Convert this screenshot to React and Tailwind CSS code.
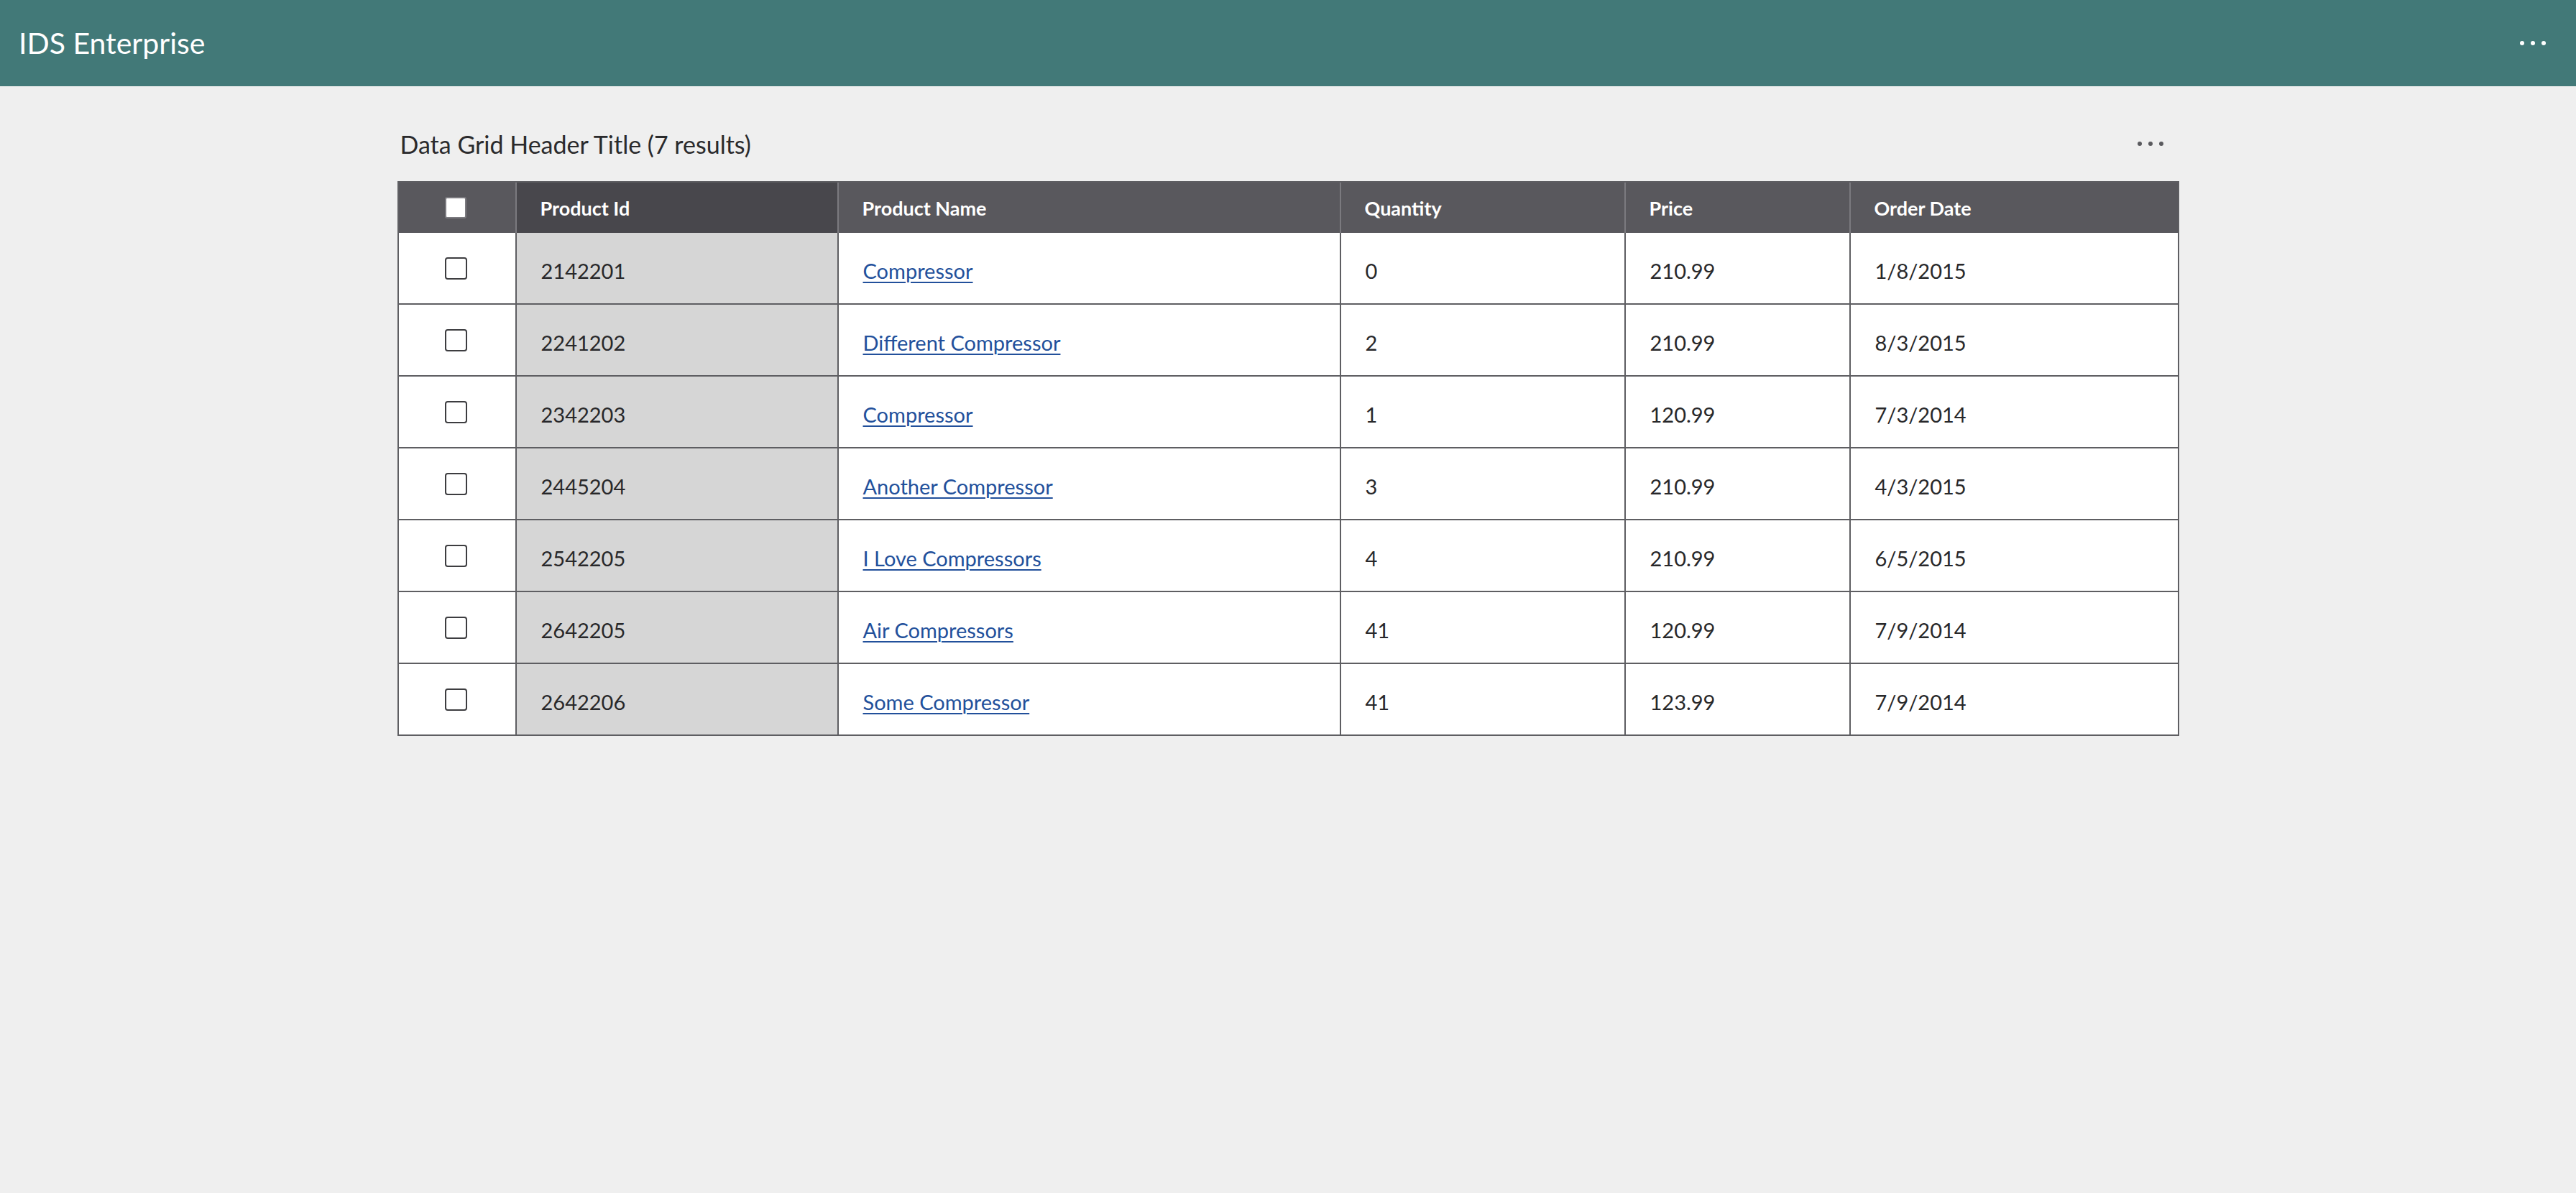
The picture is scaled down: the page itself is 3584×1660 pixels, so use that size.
// App.jsx — IDS Enterprise data grid
const ROWS = [
  { id: '2142201', name: 'Compressor', qty: '0', price: '210.99', date: '1/8/2015' },
  { id: '2241202', name: 'Different Compressor', qty: '2', price: '210.99', date: '8/3/2015' },
  { id: '2342203', name: 'Compressor', qty: '1', price: '120.99', date: '7/3/2014' },
  { id: '2445204', name: 'Another Compressor', qty: '3', price: '210.99', date: '4/3/2015' },
  { id: '2542205', name: 'I Love Compressors', qty: '4', price: '210.99', date: '6/5/2015' },
  { id: '2642205', name: 'Air Compressors', qty: '41', price: '120.99', date: '7/9/2014' },
  { id: '2642206', name: 'Some Compressor', qty: '41', price: '123.99', date: '7/9/2014' },
];

const COLS = 'grid grid-cols-[162px_448px_699px_396px_313px_457px]';

function Dots({ color }) {
  return (
    <div className="flex items-center gap-[9px] px-[6px] py-[10px]">
      <span className={`w-[6px] h-[6px] rounded-full ${color}`} />
      <span className={`w-[6px] h-[6px] rounded-full ${color}`} />
      <span className={`w-[6px] h-[6px] rounded-full ${color}`} />
    </div>
  );
}

function HeaderCell({ children, dark }) {
  return (
    <div className={`flex items-center pl-[33px] pt-[2px] border-l-2 border-[#7b7a7f] text-white text-[27px] font-bold ${dark ? 'bg-[#48474c]' : ''}`}>
      {children}
    </div>
  );
}

function Cell({ children, shaded }) {
  return (
    <div className={`flex items-center pl-[34px] pt-[7px] border-l-2 border-[#5e5e62] ${shaded ? 'bg-[#d6d6d6]' : ''}`}>
      {children}
    </div>
  );
}

export default function App() {
  return (
    <div className="min-h-[1660px] bg-[#efefef] font-['Lato','Noto_Sans',sans-serif]">
      {/* Header */}
      <header className="h-[120px] bg-[#427978] flex items-center justify-between pl-[26px] pr-[36px]">
        <h1 className="text-white text-[41px] font-normal">IDS Enterprise</h1>
        <Dots color="bg-white" />
      </header>

      {/* Grid */}
      <main className="w-[2479px] mx-auto pt-[40px]">
        <div className="flex items-center justify-between h-[80px] pl-[4px] pr-[16px] mb-[12px]">
          <h2 className="text-[34px] text-[#2a2a2c]">Data Grid Header Title (7 results)</h2>
          <Dots color="bg-[#5a5a5e]" />
        </div>

        <div className="border-2 border-[#5e5e62] bg-white">
          <div className={`${COLS} h-[70px] bg-[#59585d]`}>
            <div className="flex items-center justify-center pr-[3px]">
              <span className="w-[30px] h-[30px] rounded-[3px] bg-white border-2 border-[#7b7a7f]" />
            </div>
            <HeaderCell dark>Product Id</HeaderCell>
            <HeaderCell>Product Name</HeaderCell>
            <HeaderCell>Quantity</HeaderCell>
            <HeaderCell>Price</HeaderCell>
            <HeaderCell>Order Date</HeaderCell>
          </div>

          {ROWS.map((r, i) => (
            <div key={r.id + i} className={`${COLS} h-[98px] text-[29px] text-[#28282a] ${i > 0 ? 'border-t-2 border-[#5e5e62] h-[100px]' : ''}`}>
              <div className="flex items-center justify-center pr-[3px]">
                <span className="w-[31px] h-[31px] rounded-[4px] border-2 border-[#3d3d40] bg-white" />
              </div>
              <Cell shaded>{r.id}</Cell>
              <Cell>
                <a href="#" className="text-[#22509b] underline decoration-2 underline-offset-[4px]">{r.name}</a>
              </Cell>
              <Cell>{r.qty}</Cell>
              <Cell>{r.price}</Cell>
              <Cell>{r.date}</Cell>
            </div>
          ))}
        </div>
      </main>
    </div>
  );
}
